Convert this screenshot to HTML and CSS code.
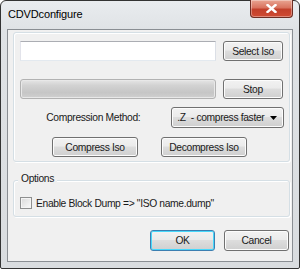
FILE: index.html
```html
<!DOCTYPE html>
<html>
<head>
<meta charset="utf-8">
<link rel="stylesheet" href="styles.css">
</head>
<body>
<div class="window">
  <div class="titlebar">
    <span class="title">CDVDconfigure</span>
    <div class="close"><svg width="11" height="9" viewBox="0 0 11 9"><path d="M1.5 1 L9.5 8 M9.5 1 L1.5 8" stroke="#fff" stroke-width="2.4" stroke-linecap="square"/><path d="M1.5 1 L9.5 8 M9.5 1 L1.5 8" stroke="#fff" stroke-width="1.2" opacity="0.9"/></svg></div>
  </div>
  <div class="client">
    <div class="group main">
      <div class="row r1">
        <div class="edit"></div>
        <button class="btn side">Select Iso</button>
      </div>
      <div class="row r2">
        <div class="progress"></div>
        <button class="btn side">Stop</button>
      </div>
      <div class="row r3">
        <span class="label">Compression Method:</span>
        <div class="combo"><span>.Z&nbsp; - compress faster</span><svg width="7" height="4" viewBox="0 0 7 4"><path d="M0 0 H7 L3.5 4 Z" fill="#000"/></svg></div>
      </div>
      <div class="row r4">
        <button class="btn wide">Compress Iso</button>
        <button class="btn wide">Decompress Iso</button>
      </div>
    </div>
    <div class="group options">
      <span class="legend">Options</span>
      <label class="check"><span class="box"></span><span>Enable Block Dump =&gt; "ISO name.dump"</span></label>
    </div>
    <div class="actions">
      <button class="btn dlg default">OK</button>
      <button class="btn dlg">Cancel</button>
    </div>
  </div>
</div>
</body>
</html>
```
FILE: styles.css
```css
* { box-sizing: border-box; }
html, body { margin: 0; padding: 0; background: #fff; }
body { font-family: "Liberation Sans", Arial, sans-serif; font-size: 10.3px; letter-spacing: -0.35px; color: #1a1a1a; white-space: nowrap; }

.window {
  width: 300px; height: 269px;
  border: 1px solid #333;
  border-radius: 6px 6px 2px 2px;
  background: linear-gradient(180deg, #e9ecef 0px, #dfe2e5 30px, #d9dcdf 100%);
  padding: 0 6px 6px 6px;
  display: flex; flex-direction: column;
}
.titlebar {
  height: 28px;
  display: flex; justify-content: space-between; align-items: flex-start;
}
.title {
  font-size: 11px; color: #000; letter-spacing: -0.15px;
  margin-top: 7px; margin-left: 1px;
}
.close {
  width: 43px; height: 18px;
  margin-top: -1px; margin-right: 0px;
  border: 1px solid #6e2e24;
  border-top: none;
  border-radius: 0 0 4px 4px;
  background: linear-gradient(180deg, #e9a592 0%, #d9735f 45%, #c2402b 55%, #d04c34 100%);
  display: flex; align-items: center; justify-content: center;
  box-shadow: inset 0 0 0 1px rgba(255,255,255,0.35);
}
.client {
  flex: 1;
  background: #f0f0f0;
  border: 1px solid #8a8e93;
  display: flex; flex-direction: column;
  padding: 2px 2px 0 5px;
}
.group {
  border: 1px solid #d5dfe5;
  border-radius: 3px;
  box-shadow: inset 1px 1px 0 #fff, 1px 1px 0 #fff;
}
.main {
  height: 130px;
  padding: 8px 5px 0 6px;
  display: flex; flex-direction: column;
}
.row { display: flex; align-items: center; }
.r1 { height: 20px; }
.r2 { height: 20px; margin-top: 18px; }
.r3 { height: 21px; margin-top: 8px; }
.r4 { height: 20px; margin-top: 9px; padding-left: 32px; gap: 23px; }

.edit {
  width: 196px; height: 20px;
  background: #fff;
  border: 1px solid #abadb3;
  border-color: #abadb3 #dbdfe6 #e3e9ef #e2e3ea;
}
.btn {
  font-family: inherit; font-size: inherit; letter-spacing: inherit; color: #1a1a1a;
  height: 20px;
  border: 1px solid #707070;
  border-radius: 3px;
  background: linear-gradient(180deg, #f2f2f2 0%, #ebebeb 45%, #dddddd 50%, #cfcfcf 100%);
  box-shadow: inset 0 0 0 1px #fcfcfc;
  padding: 0;
  display: flex; align-items: center; justify-content: center;
}
.side { width: 60px; margin-left: 7px; }
.progress {
  width: 196px; height: 20px;
  border: 1px solid #b2b2b2;
  border-radius: 3px;
  background: linear-gradient(180deg, #e6e6e6 0%, #d2d2d2 30%, #c6c6c6 70%, #d0d0d0 100%);
  box-shadow: inset 0 0 0 1px #e8e8e8;
}
.label { width: 117px; text-align: right; margin-left: 6px; }
.combo {
  margin-left: 31px;
  width: 115px; height: 21px;
  border: 1px solid #707070;
  border-radius: 3px;
  background: linear-gradient(180deg, #f2f2f2 0%, #ebebeb 45%, #dddddd 50%, #cfcfcf 100%);
  box-shadow: inset 0 0 0 1px #fcfcfc;
  display: flex; align-items: center; justify-content: space-between;
  padding: 0 6px 0 5px;
}
.wide { width: 86px; }

.options {
  margin-top: 18px;
  height: 37px;
  position: relative;
  padding: 16px 0 0 6px;
}
.legend {
  position: absolute; top: -8px; left: 4px;
  background: #f0f0f0; padding: 0 3px;
}
.check { display: flex; align-items: center; gap: 4px; }
.box {
  width: 12px; height: 12px;
  border: 1px solid #8e8f8f;
  background: linear-gradient(135deg, #d9d9d9 0%, #f0f0f0 70%, #fafafa 100%);
  box-shadow: inset 0 0 0 1px #f4f4f4;
}
.actions {
  display: flex; justify-content: flex-end; gap: 9px;
  margin-top: 13px; padding-right: 1px;
}
.dlg { width: 65px; height: 21px; }
.default {
  border-color: #3c7fb1;
  box-shadow: inset 0 0 0 1px #48d8fb;
}
```
